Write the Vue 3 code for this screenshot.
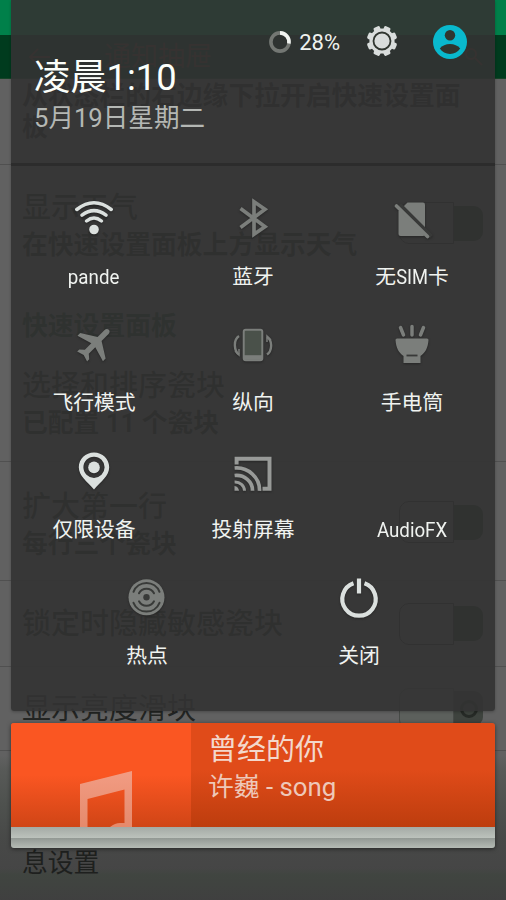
<script setup>
const settings = [
  { h: 115, title: '显示天气', sub: '在快速设置面板上方显示天气', toggle: true, low: true, divider: true },
  { h: 67, category: '快速设置面板' },
  { h: 115, title: '选择和排序瓷块', sub: '已配置 11 个瓷块' },
  { h: 119, title: '扩大第一行', sub: '每行三个瓷块', toggle: true, divider: true, low: true },
  { h: 86, title: '锁定时隐藏敏感瓷块', toggle: true, divider: true },
  { h: 84, title: '显示亮度滑块', toggle: true, knob: true, divider: true },
]
const rows = [
  [
    { icon: 'wifi', on: true, latin: 'pande' },
    { icon: 'bluetooth', text: '蓝牙' },
    { icon: 'sim', text: '无', latin: 'SIM', tail: '卡' },
  ],
  [
    { icon: 'plane', text: '飞行模式' },
    { icon: 'rotate', text: '纵向' },
    { icon: 'torch', text: '手电筒' },
  ],
  [
    { icon: 'pin', on: true, text: '仅限设备' },
    { icon: 'cast', text: '投射屏幕' },
    { icon: 'none', latin: 'AudioFX' },
  ],
  [
    { icon: 'hotspot', text: '热点' },
    { icon: 'power', on: true, text: '关闭' },
  ],
]
</script>

<template>
  <div class="screen">
    <div class="dim"></div>

    <div class="page">
      <div class="status"></div>
      <div class="appbar">
        <svg width="24" height="20" viewBox="0 0 24 20" fill="none" stroke="currentColor" stroke-width="2"><path d="M11 2 3 10l8 8M3 10h20" /></svg>
        <span class="appbar-title">通知抽屉</span>
        <svg width="20" height="20" viewBox="0 0 20 20" fill="none" stroke="currentColor" stroke-width="2"><circle cx="7" cy="7" r="5" /><path d="m11 11 7 7" /></svg>
      </div>
      <div class="intro">从状态栏的右边缘下拉开启快速设置面板</div>
      <div
        v-for="(s, i) in settings"
        :key="i"
        class="setting"
        :class="{ divider: s.divider, category: s.category, low: s.low, knobbed: s.knob }"
        :style="{ height: s.h + 'px' }"
      >
        <div class="setting-text">
          <div v-if="s.category" class="cat-name">{{ s.category }}</div>
          <div v-if="s.title" class="title">{{ s.title }}</div>
          <div v-if="s.sub" class="sub">{{ s.sub }}</div>
        </div>
        <div v-if="s.toggle" class="toggle"><div class="track"></div><div class="thumb"><i v-if="s.knob"></i></div></div>
      </div>
      <div class="setting divider footer">息设置</div>
    </div>

    <div class="shade">
      <section class="panel">
        <header class="head">
          <div class="clock">
            <div class="time">凌晨1:10</div>
            <div class="date">5月19日星期二</div>
          </div>
          <div class="battery">
            <svg width="24" height="24" viewBox="0 0 24 24" fill="none" stroke-width="3.6">
              <circle cx="12" cy="12" r="9.1" stroke="#737773" />
              <path d="M12 2.9a9.1 9.1 0 0 1 8.9 10.6" stroke="#f1f4f1" />
            </svg>
            <span>28%</span>
          </div>
          <svg class="gear" width="32" height="32" viewBox="-16 -16 32 32">
            <g fill="#d9dddc">
              <circle r="12.6" />
              <rect v-for="n in 8" :key="n" x="-3.4" y="-15.2" width="6.8" height="6" rx="1.6" :transform="`rotate(${n * 45 + 22.5})`" />
            </g>
            <circle r="8.5" fill="#d9dddc" stroke="#303630" stroke-width="1.8" />
          </svg>
          <svg class="avatar" width="34" height="34" viewBox="0 0 34 34">
            <circle cx="17" cy="17" r="17" fill="#09b9ce" />
            <circle cx="17" cy="10.2" r="5.2" fill="#30362f" />
            <path d="M6.8 23.6C9 20.4 13 18.9 17 18.9s8 1.5 10.2 4.7C25 27 21.2 29 17 29s-8-2-10.2-5.4z" fill="#30362f" />
          </svg>
        </header>

        <div class="tiles">
          <div v-for="(row, r) in rows" :key="r" class="row">
            <div v-for="t in row" :key="t.icon" class="tile" :class="[t.icon, { on: t.on }]">
              <svg class="icon" width="44" height="44" viewBox="-22 -22 44 44">
                <g v-if="t.icon === 'wifi'" fill="none" stroke="currentColor" stroke-width="3.5" stroke-linecap="round">
                  <path d="M-17.2-8.5Q0-22 17.2-8.5M-12-2.8Q0-12 12-2.8M-7.400 3Q0-3 7.400 3" />
                  <circle cy="11.5" r="4.8" fill="currentColor" stroke="none" />
                </g>
                <path v-else-if="t.icon === 'bluetooth'" d="M-12.500-9.500 12 8.700 1 16.300V-16.300L12-8.700-12.500 9.500" fill="none" stroke="currentColor" stroke-width="3.7" />
                <g v-else-if="t.icon === 'sim'">
                  <path d="M-4.500-15.500H11q2 0 2 2V16q0 2-2 2H-11.500q-2 0-2-2V-6.500z" fill="currentColor" />
                  <path d="m-12.500-13.500 32 32" stroke="#383938" stroke-width="4" />
                  <path d="M-15.500-12 15.500 18.500" stroke="currentColor" stroke-width="3.6" stroke-linecap="round" />
                </g>
                <path v-else-if="t.icon === 'plane'" transform="translate(.3 -.7) rotate(45)" d="M0-20.500c2 0 2.800 1.600 2.800 3.500v9.500L18 2v3.800L2.800 1.400v9.200l4.200 3.600v3L0 15l-7 2.200v-3l4.200-3.600V1.400L-18 5.800V2L-2.800-7.500V-17c0-1.900.8-3.500 2.800-3.500z" fill="currentColor" />
                <g v-else-if="t.icon === 'rotate'" fill="none" stroke="currentColor">
                  <rect x="-9.300" y="-15.300" width="18.600" height="30.600" rx="2" stroke-width="2" fill="#4a514a" />
                  <path d="M-9 12.500H9" stroke-width="4.600" />
                  <path d="M-14-9C-20-5-19 6-14 9.500M14-8C20-4 19 6 14 9.500" stroke-width="2.400" />
                  <path d="m-18 6 4 4v-6M18-5l-4-4v6" stroke-width="1.500" />
                </g>
                <g v-else-if="t.icon === 'torch'" fill="currentColor">
                  <path d="m-11.500-17.500 3 7.500M0-18.500v8.500M11.500-17.500l-3 7.500" stroke="currentColor" stroke-width="3.500" stroke-linecap="round" />
                  <path d="M-15-6.500h30q1.500 0 1.500 1.500C16 3 13 8 8.500 11v7H-8.500v-7C-13 8-16 3-16.500-5q0-1.500 1.500-1.500z" />
                  <path d="M-5.500 10.500h11" stroke="#383938" stroke-width="1.800" />
                </g>
                <g v-else-if="t.icon === 'pin'">
                  <path fill-rule="evenodd" d="M0-18.500c8.500 0 15.200 6.500 15.200 14.800C15.200 5 7 10.500 0 18.500-7 10.500-15.200 5-15.200-3.700-15.200-12-8.500-18.500 0-18.500zm0 4.200a10.600 10.600 0 1 0 0 21.200 10.600 10.600 0 1 0 0-21.200z" fill="currentColor" />
                  <circle cy="-3.600" r="5.800" fill="currentColor" />
                </g>
                <g v-else-if="t.icon === 'cast'" transform="translate(0 1)" fill="none" stroke="currentColor" stroke-width="4">
                  <path d="M-16.400-7.500v-5.700H16.500v30H9.500" />
                  <path d="M-18.400-4A23 22 0 0 1 6.500 18.800M-18.400 3.500A16 15 0 0 1-.5 18.800" stroke-width="3.700" />
                  <path d="M-18.400 10A9.500 9 0 0 1-8.500 18.800" stroke-width="3" />
                  <path d="M-18.500 14q4 .5 4.500 4.800h-4.500z" fill="currentColor" stroke="none" />
                </g>
                <g v-else-if="t.icon === 'hotspot'" transform="translate(-.5 -.7)" fill="none" stroke="#383a38" stroke-width="2">
                  <circle r="18" fill="currentColor" stroke="none" />
                  <path d="M-13-5.500a14 14 0 0 1 26 0M-13 5.500a14 14 0 0 0 26 0M-7.500-4a8.500 8.500 0 0 1 15 0M-7.500 4a8.500 8.500 0 0 0 15 0" stroke-linecap="round" />
                  <circle r="3.200" fill="#383a38" stroke="none" />
                </g>
                <g v-else-if="t.icon === 'power'" fill="none" stroke="currentColor" stroke-width="4.200">
                  <path d="M-5.500-14.800a16.700 16.700 0 1 0 11 0M0-19.500V-4.500" />
                </g>
              </svg>
              <div class="label">{{ t.text }}<span v-if="t.latin" class="latin" :class="{ mixed: t.text }">{{ t.latin }}</span>{{ t.tail }}</div>
            </div>
          </div>
        </div>
      </section>

      <section class="stack">
        <div class="music">
          <div class="art">
            <svg width="180" height="104" viewBox="0 0 180 104">
              <defs>
                <linearGradient id="note" x2="0" y2="1">
                  <stop offset="0" stop-color="#f29c83" />
                  <stop offset="1" stop-color="#e58a6c" />
                </linearGradient>
              </defs>
              <path d="M69 104V61l52-13v56h-7.500V66.500L76.500 76v28z" fill="url(#note)" />
              <path d="M99 104q5-4 10-4h5v4z" fill="#e58a6c" />
            </svg>
          </div>
          <div class="track-info">
            <div class="song">曾经的你</div>
            <div class="artist">许巍 - song</div>
          </div>
        </div>
        <div class="sheet first"></div>
        <div class="sheet second"></div>
      </section>
    </div>
  </div>
</template>

<style>
body {
  margin: 0;
}
</style>

<style scoped>
.screen {
  display: grid;
  width: 506px;
  height: 900px;
  overflow: hidden;
  font-family: Roboto, "Noto Sans CJK SC", sans-serif;
  background: #616161;
}
.page,
.dim,
.shade {
  grid-area: 1 / 1;
  min-width: 0;
}
.status {
  height: 35px;
  background: #00804a;
}
.appbar {
  display: flex;
  align-items: center;
  height: 44px;
  padding: 0 22px 0 27px;
  box-sizing: border-box;
  background: #003b1e;
  color: #50301f;
  border-bottom: 1px solid #174328;
}
.appbar-title {
  flex: 1;
  margin-left: 53px;
  font-size: 27px;
  line-height: 30px;
}
.intro {
  height: 85px;
  box-sizing: border-box;
  padding: 2px 40px 0 22px;
  font-size: 25.8px;
  line-height: 31px;
  font-weight: 600;
  color: #151815;
}
.setting {
  display: flex;
  align-items: center;
  box-sizing: border-box;
  padding: 0 23px 0 22px;
  color: #121512;
  border-top: 1px solid transparent;
}
.divider {
  border-top-color: #505050;
}
.setting-text {
  flex: 1;
  white-space: nowrap;
}
.low .setting-text {
  padding-top: 8px;
}
.title {
  font-size: 29px;
  line-height: 38px;
  font-weight: 500;
}
.sub {
  font-size: 25.8px;
  line-height: 37px;
  font-weight: 600;
}
.category {
  align-items: flex-start;
}
.cat-name {
  margin-top: 28px;
  font-size: 25.8px;
  line-height: 36px;
  font-weight: 600;
  color: #0c2c14;
}
.toggle {
  display: flex;
  align-items: center;
  margin-left: -100px;
}
.low .toggle {
  padding-top: 2px;
}
.track {
  width: 53px;
  height: 40px;
  border: 1px solid #202020;
  border-radius: 10px 0 0 10px;
}
.thumb {
  display: grid;
  place-items: center;
  width: 29px;
  height: 35px;
  border-radius: 0 9px 9px 0;
  background: #1a281c;
}
.thumb i {
  width: 12px;
  height: 12px;
  border: 3px solid #262a26;
  border-radius: 50%;
}
.knobbed {
  color: #232523;
}
.knobbed .title {
  font-weight: 400;
}
.knobbed .track {
  border-color: #474a47;
  background: #5c605c;
}
.knobbed .thumb {
  background: #3e433e;
}
.footer {
  height: 150px;
  padding-top: 70px;
  font-size: 25.8px;
  color: #1e201e;
}
.dim {
  background: linear-gradient(
    transparent 755px,
    rgba(60, 68, 60, 0.25) 770px,
    rgba(60, 66, 60, 0.5) 803px,
    rgba(58, 60, 58, 0.65) 838px,
    rgba(58, 58, 58, 0.7) 868px,
    rgba(56, 62, 56, 0.8) 875px,
    rgba(60, 60, 60, 0.9) 900px
  );
}
.shade {
  display: flex;
  flex-direction: column;
  gap: 12px;
  padding: 0 11px;
}
.panel {
  height: 711px;
  background: rgba(51, 51, 51, 0.9);
  border-radius: 0 0 3px 3px;
  box-shadow: 0 1px 3px rgba(0, 0, 0, 0.25);
}
.head {
  display: flex;
  align-items: flex-start;
  height: 166px;
  box-sizing: border-box;
  padding: 0 28px 0 23px;
  border-bottom: 3px solid #2c2c2c;
}
.clock {
  flex: 1;
  padding-top: 56px;
  white-space: nowrap;
}
.time {
  font-size: 36.3px;
  line-height: 43px;
  color: #fbfffb;
}
.date {
  font-size: 25.6px;
  line-height: 38px;
  color: #b4b7b4;
}
.battery {
  display: flex;
  align-items: center;
  gap: 7px;
  margin-top: 30px;
  font-size: 22px;
  line-height: 26px;
  color: #eef2ee;
}
.battery svg {
  margin-top: -2px;
}
.gear {
  margin: 25px 0 0 26px;
}
.avatar {
  margin: 25px 0 0 35px;
}
.tiles {
  display: flex;
  flex-direction: column;
  padding: 30px 3.5px 0;
}
.row {
  display: flex;
  justify-content: space-evenly;
  height: 126.5px;
}
.tile {
  display: flex;
  flex-direction: column;
  align-items: center;
  width: 159px;
  color: #7b7e7b;
}
.tile.cast {
  color: #989a98;
}
.tile.on {
  color: #dbe0de;
}
.icon {
  filter: drop-shadow(0 1px 1px rgba(20, 20, 20, 0.5));
}
.label {
  margin-top: 20.5px;
  font-size: 20.8px;
  line-height: 32px;
  color: #f0f3f0;
  white-space: nowrap;
}
.latin {
  display: inline-block;
  transform: scaleX(0.9);
}
.latin.mixed {
  transform: scaleX(0.88);
  margin: 0 -2.2px;
}
.stack {
  height: 125px;
  border-radius: 3px;
  overflow: hidden;
  box-shadow: 0 1px 4px rgba(0, 0, 0, 0.5);
}
.music {
  display: flex;
  height: 104px;
  background: linear-gradient(#e04b19 45%, #bd3d0e);
}
.art {
  width: 180px;
  background: linear-gradient(#fa5622 50%, #d04516);
}
.art svg {
  display: block;
}
.track-info {
  padding: 7px 0 0 17px;
  color: #f3d8cc;
}
.song {
  font-size: 29px;
  line-height: 40px;
}
.artist {
  font-size: 25.8px;
  line-height: 35px;
  color: #eec8b9;
}
.sheet {
  height: 11px;
  background: linear-gradient(#a4aaa5, #bcc2bc);
}
.second {
  background: linear-gradient(#929893, #b8beb8);
}
</style>
